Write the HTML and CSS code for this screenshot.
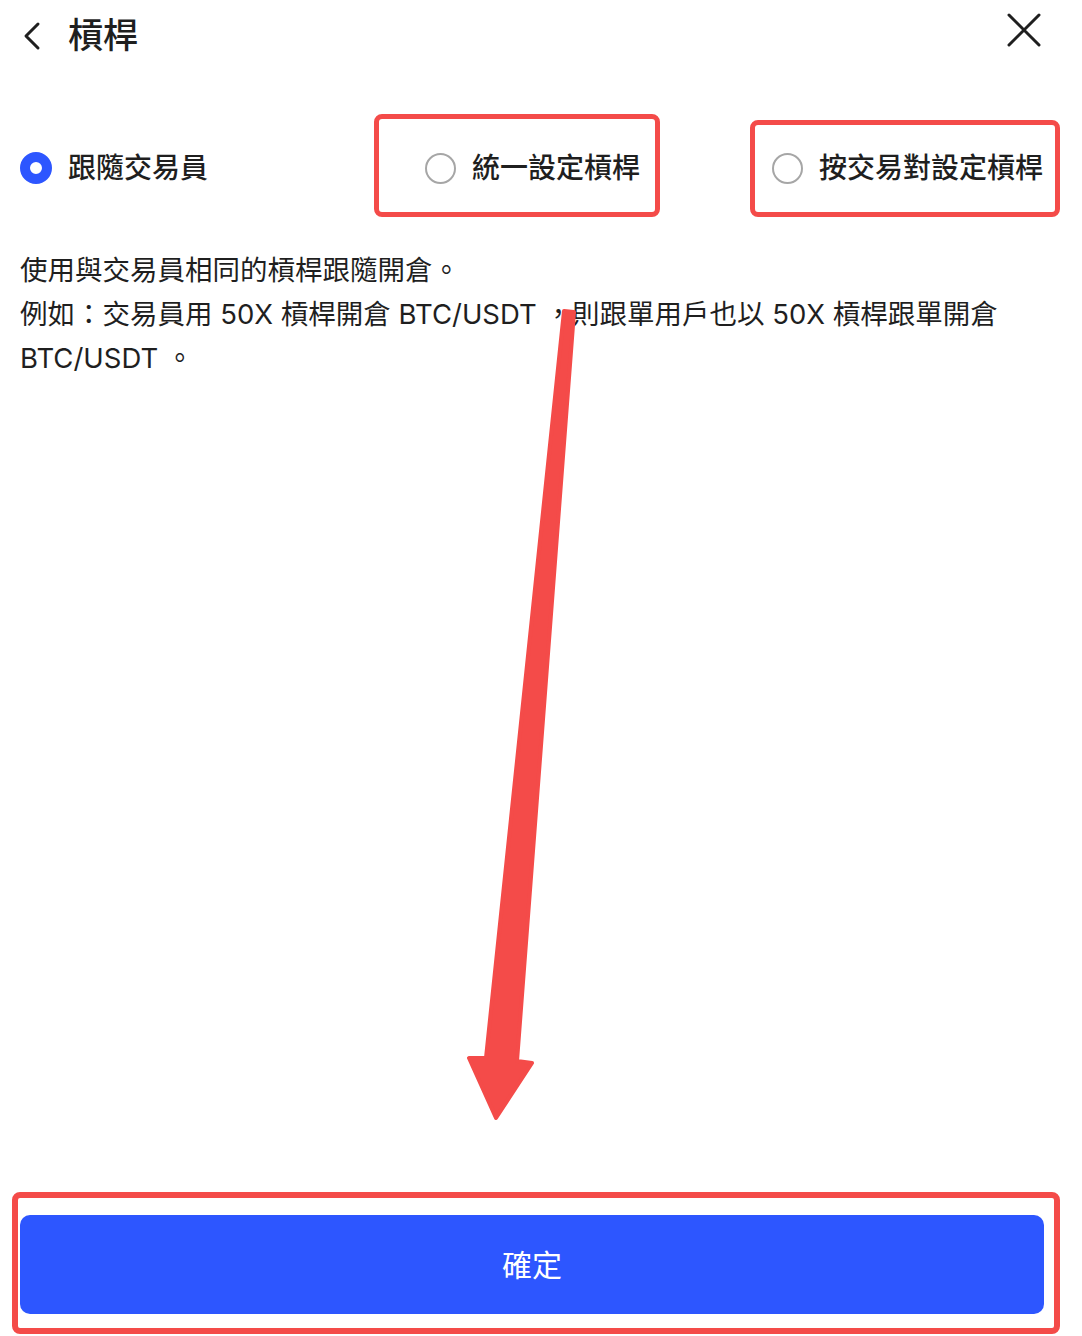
FILE: index.html
```html
<!DOCTYPE html>
<html lang="zh-Hant">
<head>
<meta charset="utf-8">
<title>槓桿</title>
<link rel="stylesheet" href="styles.css">
</head>
<body>
<div class="page">
  <header class="header">
    <div class="header-left">
      <svg class="icon-back" viewBox="0 0 24 30" width="24" height="30">
        <path d="M18 3 L6 15 L18 27" fill="none" stroke="#1f1f1f" stroke-width="3" stroke-linecap="round" stroke-linejoin="round"/>
      </svg>
      <h1 class="title">槓桿</h1>
    </div>
    <svg class="icon-close" viewBox="0 0 34 34" width="34" height="34">
      <path d="M2 2 L32 32 M32 2 L2 32" fill="none" stroke="#1f1f1f" stroke-width="3" stroke-linecap="round"/>
    </svg>
  </header>

  <div class="options">
    <label class="option option-first">
      <span class="radio radio-checked"></span>
      <span class="option-text">跟隨交易員</span>
    </label>
    <label class="option option-second">
      <span class="radio"></span>
      <span class="option-text">統一設定槓桿</span>
    </label>
    <label class="option option-third">
      <span class="radio"></span>
      <span class="option-text">按交易對設定槓桿</span>
    </label>
  </div>

  <div class="desc">
    <p>使用與交易員相同的槓桿跟隨開倉。</p>
    <p>例如：交易員用 50X 槓桿開倉 BTC/USDT ，則跟單用戶也以 50X 槓桿跟單開倉 BTC/USDT 。</p>
  </div>

  <div class="spacer"></div>

  <div class="footer">
    <button class="confirm">確定</button>
  </div>
</div>

<div class="mark mark-1"></div>
<div class="mark mark-2"></div>
<div class="mark mark-3"></div>
<svg class="arrow" viewBox="0 0 1082 1336" width="1082" height="1336">
  <polygon points="564,311 574,312 517,1061 532,1063 496,1118 469,1058 486,1058" fill="#f44b49" stroke="#f44b49" stroke-width="4" stroke-linejoin="round"/>
</svg>
</body>
</html>
```

FILE: styles.css
```css
* { box-sizing: border-box; }

html, body {
  margin: 0;
  padding: 0;
  background: #ffffff;
}

body {
  position: relative;
  width: 1082px;
  min-height: 1336px;
  font-family: "Inter", "Noto Sans CJK TC", "Noto Sans", sans-serif;
  color: #1f1f1f;
}

.page {
  display: flex;
  flex-direction: column;
  min-height: 1336px;
}

.header {
  height: 70px;
  display: flex;
  align-items: center;
  justify-content: space-between;
  padding: 0 41px 0 20px;
}

.header-left {
  display: flex;
  align-items: center;
}

.icon-back {
  display: block;
  margin-right: 24px;
  margin-top: 2px;
}

.title {
  margin: 0;
  font-size: 35px;
  font-weight: 500;
  line-height: 40px;
  color: #1f1f1f;
}

.icon-close {
  display: block;
  margin-top: -10px;
}

.options {
  display: flex;
  align-items: center;
  height: 50px;
  margin-top: 73px;
  padding-left: 20px;
}

.option {
  display: flex;
  align-items: center;
  gap: 16px;
}

.option-second { margin-left: 217px; }
.option-third { margin-left: 132px; }

.radio {
  width: 31px;
  height: 31px;
  border-radius: 50%;
  border: 2px solid #a6a6a6;
  background: #fff;
  flex: none;
}

.radio-checked {
  width: 32px;
  height: 32px;
  border: 10px solid #2d56ff;
}

.option-text {
  font-size: 28px;
  font-weight: 500;
  line-height: 36px;
  color: #1f1f1f;
  white-space: nowrap;
}

.desc {
  margin-top: 55px;
  padding: 0 20px;
  font-size: 27.5px;
  line-height: 44px;
  color: #1f1f1f;
}

.desc p {
  margin: 0;
}

.spacer {
  flex: 1;
}

.footer {
  padding: 0 38px 22px 20px;
}

.confirm {
  display: block;
  width: 100%;
  height: 99px;
  border: none;
  border-radius: 10px;
  background: #2d56ff;
  color: #ffffff;
  font-family: "Inter", "Noto Sans CJK TC", sans-serif;
  font-size: 30px;
  font-weight: 400;
  padding: 0 0 4px;
}

.mark {
  position: absolute;
  border: 5px solid #f44b49;
  border-radius: 8px;
  pointer-events: none;
}

.mark-1 { left: 374px; top: 114px; width: 286px; height: 103px; }
.mark-2 { left: 750px; top: 120px; width: 310px; height: 97px; }
.mark-3 { left: 12px; top: 1192px; width: 1048px; height: 142px; border-width: 6px; }

.arrow {
  position: absolute;
  left: 0;
  top: 0;
  pointer-events: none;
}
```
